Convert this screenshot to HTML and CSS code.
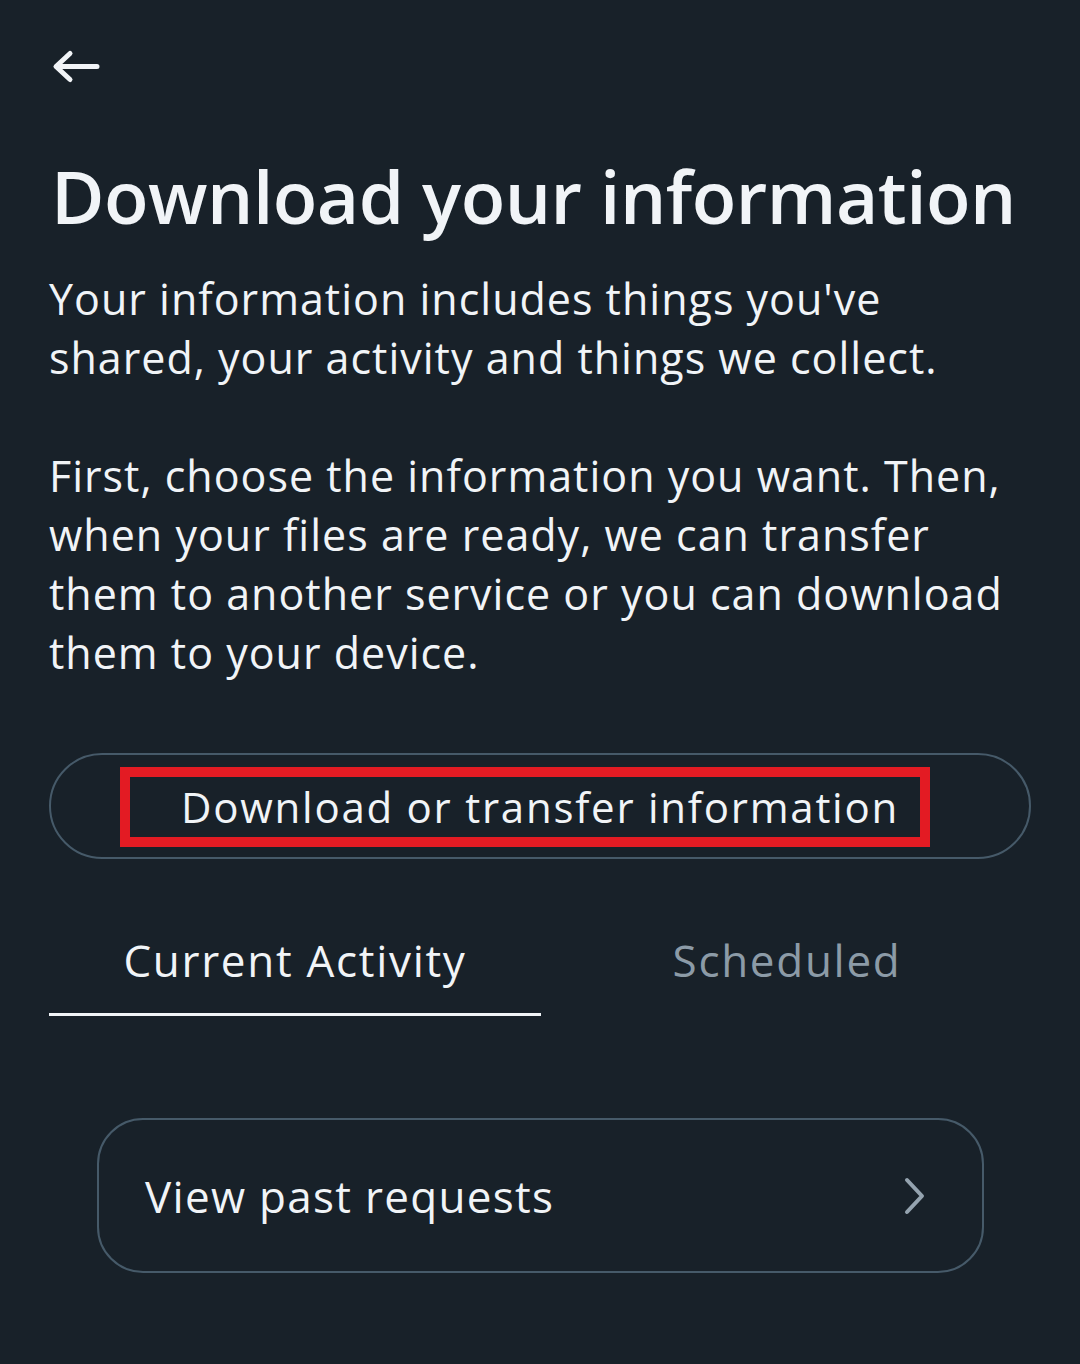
FILE: index.html
```html
<!DOCTYPE html>
<html lang="en">
<head>
  <meta charset="UTF-8">
  <meta name="viewport" content="width=device-width, initial-scale=1.0">
  <title>Download your information</title>
  <link rel="stylesheet" href="styles.css">
</head>
<body>
  <div class="screen">
    <!-- Top bar -->
    <button class="back-btn" aria-label="Back">
      <svg width="52" height="40" viewBox="0 0 52 40">
        <path d="M46 17.5H6M19 4.5L5 17.5L19 30.5" fill="none" stroke="#f1f4f7" stroke-width="5" stroke-linecap="round" stroke-linejoin="round"/>
      </svg>
    </button>

    <h1>Download your information</h1>
    <p class="intro">Your information includes things you've shared, your activity and things we collect.</p>
    <p class="intro">First, choose the information you want. Then, when your files are ready, we can transfer them to another service or you can download them to your device.</p>

    <button class="pill-btn">
      Download or transfer information
      <span class="highlight"></span>
    </button>

    <!-- Tabs -->
    <div class="tabs">
      <div class="tab active">Current Activity</div>
      <div class="tab">Scheduled</div>
    </div>

    <button class="row-card">
      <span>View past requests</span>
      <svg width="26" height="40" viewBox="0 0 26 40">
        <path d="M5 4L20 20L5 36" fill="none" stroke="#94a3af" stroke-width="4" stroke-linecap="round" stroke-linejoin="round"/>
      </svg>
    </button>
  </div>
</body>
</html>
```

FILE: styles.css
```css
html, body {
  margin: 0;
  background-color: #182129;
}
body {
  font-family: "Open Sans", "Noto Sans", sans-serif;
  color: #f1f4f7;
}
.screen {
  width: 1080px;
  height: 1364px;
  box-sizing: border-box;
  padding: 49px 49px 0 49px;
}
button {
  font-family: inherit;
  color: inherit;
  background: none;
  border: none;
  padding: 0;
  cursor: pointer;
}
.back-btn {
  display: block;
  margin-left: 2px;
  width: 52px;
  height: 40px;
}
.back-btn svg {
  display: block;
}
h1 {
  margin: 61px 0 0 2px;
  font-size: 73px;
  font-weight: 600;
  line-height: 92px;
  letter-spacing: -0.5px;
}
.intro {
  margin: 27px 0 59px 0;
  font-size: 43px;
  line-height: 59px;
  letter-spacing: 1px;
}
.intro + .intro {
  margin-top: 0;
}
.pill-btn {
  position: relative;
  display: block;
  width: 982px;
  height: 106px;
  margin-top: 71px;
  border: 2px solid #465a69;
  border-radius: 53px;
  font-size: 42px;
  letter-spacing: 1.75px;
}
.highlight {
  position: absolute;
  left: 69px;
  top: 12px;
  width: 790px;
  height: 60px;
  border: 10px solid #e31b23;
}
.tabs {
  display: flex;
  width: 984px;
  margin-top: 53px;
}
.tab {
  flex: 1;
  text-align: center;
  font-size: 44px;
  letter-spacing: 1.7px;
  padding: 18px 0 23px;
  color: #8c9ba7;
  border-bottom: 3px solid transparent;
}
.tab.active {
  color: #f1f4f7;
  border-bottom-color: #f1f4f7;
}
.row-card {
  display: flex;
  align-items: center;
  justify-content: space-between;
  width: 887px;
  height: 155px;
  margin: 102px 0 0 48px;
  padding: 0 54px 0 46px;
  box-sizing: border-box;
  border: 2px solid #465a69;
  border-radius: 46px;
  font-size: 44px;
  letter-spacing: 1.3px;
}
.row-card svg {
  display: block;
}
```
